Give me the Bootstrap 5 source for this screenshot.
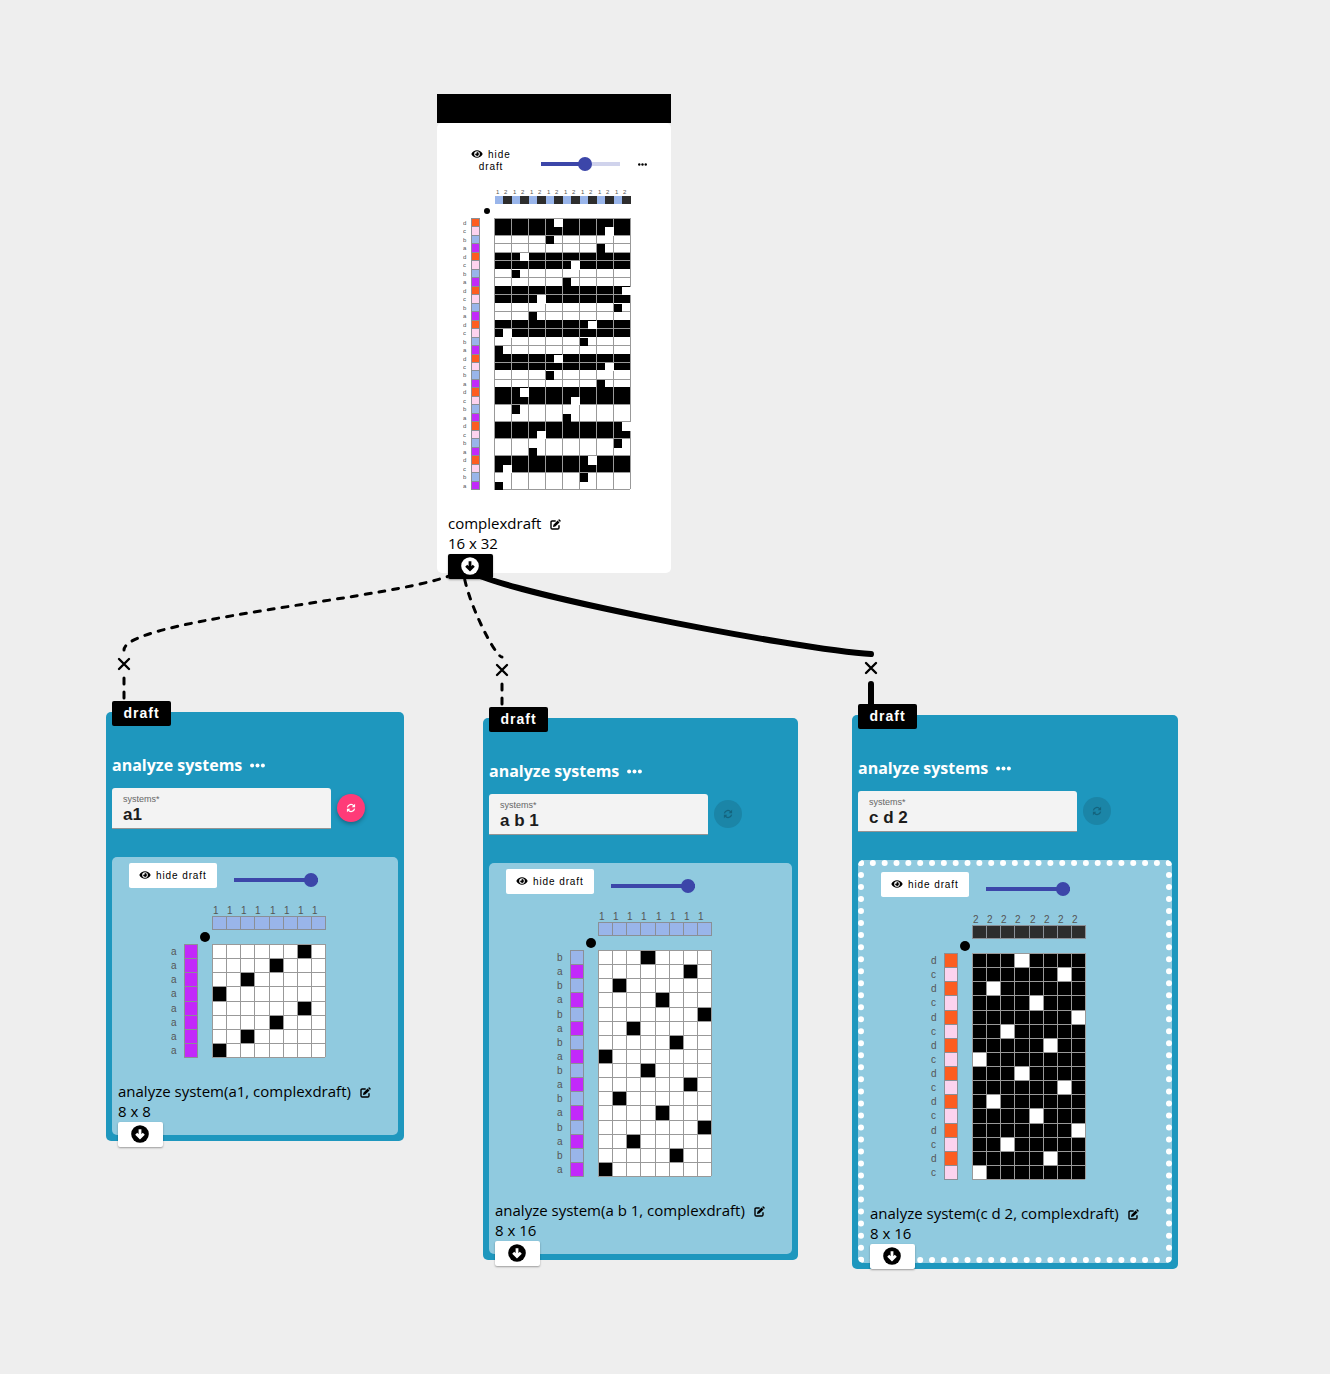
<!DOCTYPE html>
<html lang="en">
<head>
<meta charset="utf-8">
<meta name="viewport" content="width=device-width, initial-scale=1">
<title>Draft workspace</title>
<link href="https://cdn.jsdelivr.net/npm/bootstrap@5.3.0/dist/css/bootstrap.min.css" rel="stylesheet">
<style>
  body { background: #eee; color: #000; font-family: "Open Sans", "Noto Sans", sans-serif; font-size: 15px; line-height: 20px; }
  .workspace { min-height: 100vh; min-width: 1190px; }
  .wires { left: 0; top: 0; pointer-events: none; }
  .node { border-radius: 5px; }
  .node-seed { left: 437px; top: 94px; width: 234px; }
  .node-a { left: 106px; top: 712px; width: 298px; }
  .node-ab { left: 483px; top: 718px; width: 315px; }
  .node-cd { left: 852px; top: 715px; width: 326px; }
  .operation { background: #1e97be; padding: 43px 6px 6px; }
  .title-bar { height: 29px; background: #000; }
  .sheet { background: #fff; border-radius: 5px; padding: 12px 11px; }
  .panel { background: #90cadf; border-radius: 5px; padding: 6px; }
  .panel-selected { border: 6px dotted #fff; }
  .inlet { left: 6px; top: -11px; width: 59px; height: 25px; padding: 0; border: 0; border-radius: 2px; background: #000; color: #fff; font: 700 14px/25px "Liberation Sans", sans-serif; letter-spacing: 1px; }
  .op-title { color: #fff; font-size: 16px; font-weight: 700; line-height: 20px; margin-bottom: 13px; gap: 8px; }
  .bare { padding: 0; border: 0; background: none; color: inherit; line-height: 0; }
  .param-row { gap: 6px; margin-bottom: 28px; }
  .param { width: 219px; height: 41px; background: #f3f3f3; border-radius: 3px 3px 0 0; border-bottom: 1px solid #949494; padding: 7px 11px 0; font-family: "Liberation Sans", sans-serif; }
  .param label { font-size: 9px; line-height: 9px; color: #666; }
  .param input { border: 0; padding: 0; background: none; width: 100%; height: 22px; font-size: 17px; font-weight: 700; color: #1c1c1c; outline: 0; }
  .run-btn { width: 28px; height: 28px; margin-top: 6px; padding: 0; border: 0; border-radius: 50%; background: #ff3b78; color: #fff; box-shadow: 0 2px 4px rgba(0,0,0,.3); }
  .run-btn:disabled { background: #1b85a7; color: #14647e; box-shadow: none; }
  .tools { margin-bottom: 14px; padding-left: 11px; gap: 17px; }
  .toggle-btn { width: 88px; height: 25px; padding: 0; border: 0; border-radius: 2px; background: #fff; color: #000; font: 10px/12px "Liberation Sans", sans-serif; letter-spacing: .09em; }
  .toggle-btn svg { vertical-align: -1px; margin-right: 1px; }
  .tools-seed { height: 52px; margin-bottom: 0; padding: 0 12px 0 14px; gap: 0; }
  .tools-seed .toggle-btn { width: 58px; height: 24px; }
  .zoom-range { -webkit-appearance: none; appearance: none; width: 84px; height: 14px; margin: 8px 0 0; background: linear-gradient(#3c46a9, #3c46a9) center / 100% 4px no-repeat; border-radius: 2px; }
  .zoom-range::-webkit-slider-thumb { -webkit-appearance: none; width: 14px; height: 14px; border-radius: 50%; background: #3c46a9; border: 0; }
  .tools-seed .zoom-range { width: 79px; margin: 6px 0 0 21px; background: linear-gradient(90deg, #3c46a9 55%, #d0d3ec 55%) center / 100% 4px no-repeat; }
  .tools-seed .more { margin: 6px 0 0 18px; }
  .grid-wrap { margin-bottom: 10px; line-height: 0; }
  .grid-wrap text { font-family: "Liberation Sans", sans-serif; fill: #555; }
  .draft-name { gap: 9px; }
  .draft-name .bare { margin-top: 2px; }
  .outlet { --arrow: #fff; width: 45px; height: 25px; margin: 1px 0 -18px; padding: 0 2px 1px 0; border: 0; border-radius: 2px; background: #fff; color: #000; box-shadow: 0 1px 2px rgba(0,0,0,.35); position: relative; line-height: 0; }
  .outlet-dark { --arrow: #000; background: #000; color: #fff; }
  .cut { width: 16px; height: 16px; }
  .cut-a { left: 116px; top: 656px; }
  .cut-ab { left: 494px; top: 662px; }
  .cut-cd { left: 863px; top: 660px; }
</style>
</head>
<body>
<svg width="0" height="0" class="position-absolute" aria-hidden="true">
  <symbol id="eye" viewBox="0 0 576 512"><path fill="currentColor" d="M572.52 241.4C518.29 135.59 410.93 64 288 64S57.68 135.64 3.48 241.41a32.35 32.35 0 0 0 0 29.19C57.71 376.41 165.07 448 288 448s230.32-71.64 284.52-177.41a32.35 32.35 0 0 0 0-29.19zM288 400a144 144 0 1 1 144-144 143.93 143.93 0 0 1-144 144zm0-240a95.31 95.31 0 0 0-25.31 3.79 47.85 47.85 0 0 1-66.9 66.9A95.78 95.78 0 1 0 288 160z"/></symbol>
  <symbol id="dots" viewBox="0 0 15 5"><g fill="currentColor"><circle cx="2.1" cy="2.5" r="2"/><circle cx="7.5" cy="2.5" r="2"/><circle cx="12.9" cy="2.5" r="2"/></g></symbol>
  <symbol id="edit" viewBox="0 0 11 11"><path d="M5.2 2H2.2Q1 2 1 3.2v5.6Q1 10 2.2 10h5.6Q9 10 9 8.800V6.800" fill="none" stroke="currentColor" stroke-width="1.400" stroke-linecap="round"/><path d="M3.400 5.700 7.600 1.500 9.500 3.400 5.300 7.600 3 8zM8.100 1 8.700.4Q9.100 0 9.600.4L10.600 1.400Q11 1.900 10.600 2.300L10 2.900z" fill="currentColor"/></symbol>
  <symbol id="sync" viewBox="0 0 12 12"><g fill="none" stroke="currentColor" stroke-width="1.500"><path d="M1.700 5.200A4.300 4.300 0 0 1 9.300 3.400M10.300 6.800A4.300 4.300 0 0 1 2.700 8.600"/></g><path d="M10.900 1v4.100H6.800zM1.100 11V6.900h4.100z" fill="currentColor"/></symbol>
  <symbol id="cross" viewBox="0 0 16 16"><path d="M3 3l10 10M13 3L3 13" stroke="#000" stroke-width="2.400" stroke-linecap="round"/></symbol>
  <symbol id="down" viewBox="0 0 18 18"><circle cx="9" cy="9" r="8.800" fill="currentColor"/><path d="M9 4.200v7.500M5.200 8.700 9 12.500l3.800-3.800" fill="none" stroke="var(--arrow)" stroke-width="2.800"/></symbol>
</svg>

<main class="workspace position-relative">

  <section class="node node-seed position-absolute">
    <div class="title-bar"></div>
    <div class="sheet">
      <div class="tools tools-seed d-flex align-items-center">
        <button class="toggle-btn" type="button"><svg width="12" height="10" aria-hidden="true"><use href="#eye"/></svg> hide draft</button>
        <input class="zoom-range" type="range" min="0" max="100" value="57" aria-label="Zoom of complexdraft">
        <button class="bare more" type="button" aria-label="More options"><svg width="9" height="3" aria-hidden="true"><use href="#dots"/></svg></button>
      </div>
      <div class="grid-wrap text-center" data-grid="seed"></div>
      <div class="draft-name d-flex align-items-center"><span>complexdraft</span><button class="bare" type="button" aria-label="Rename"><svg width="11" height="11" aria-hidden="true"><use href="#edit"/></svg></button></div>
      <div>16 x 32</div>
      <button class="outlet outlet-dark d-block" type="button" aria-label="Connect output"><svg width="18" height="18" aria-hidden="true"><use href="#down"/></svg></button>
    </div>
  </section>

  <section class="node node-a operation position-absolute">
    <button class="inlet position-absolute" type="button">draft</button>
    <h2 class="op-title d-flex align-items-center">analyze systems <button class="bare" type="button" aria-label="Operation menu"><svg width="15" height="5" aria-hidden="true"><use href="#dots"/></svg></button></h2>
    <div class="param-row d-flex align-items-start">
      <div class="param"><label class="d-block" for="sys-a">systems*</label><input class="d-block" id="sys-a" type="text" value="a1"></div>
      <button class="run-btn d-flex align-items-center justify-content-center" type="button" aria-label="Recompute"><svg width="10" height="10" aria-hidden="true"><use href="#sync"/></svg></button>
    </div>
    <div class="panel">
      <div class="tools d-flex align-items-center">
        <button class="toggle-btn" type="button"><svg width="12" height="10" aria-hidden="true"><use href="#eye"/></svg> hide draft</button>
        <input class="zoom-range" type="range" min="0" max="100" value="100" aria-label="Zoom of a1 draft">
      </div>
      <div class="grid-wrap text-center" data-grid="a"></div>
      <div class="draft-name d-flex align-items-center"><span>analyze system(a1, complexdraft)</span><button class="bare" type="button" aria-label="Rename"><svg width="11" height="11" aria-hidden="true"><use href="#edit"/></svg></button></div>
      <div>8 x 8</div>
      <button class="outlet d-block" type="button" aria-label="Connect output"><svg width="18" height="18" aria-hidden="true"><use href="#down"/></svg></button>
    </div>
  </section>

  <section class="node node-ab operation position-absolute">
    <button class="inlet position-absolute" type="button">draft</button>
    <h2 class="op-title d-flex align-items-center">analyze systems <button class="bare" type="button" aria-label="Operation menu"><svg width="15" height="5" aria-hidden="true"><use href="#dots"/></svg></button></h2>
    <div class="param-row d-flex align-items-start">
      <div class="param"><label class="d-block" for="sys-ab">systems*</label><input class="d-block" id="sys-ab" type="text" value="a b 1"></div>
      <button class="run-btn d-flex align-items-center justify-content-center" type="button" disabled aria-label="Recompute"><svg width="10" height="10" aria-hidden="true"><use href="#sync"/></svg></button>
    </div>
    <div class="panel">
      <div class="tools d-flex align-items-center">
        <button class="toggle-btn" type="button"><svg width="12" height="10" aria-hidden="true"><use href="#eye"/></svg> hide draft</button>
        <input class="zoom-range" type="range" min="0" max="100" value="100" aria-label="Zoom of a b 1 draft">
      </div>
      <div class="grid-wrap text-center" data-grid="ab"></div>
      <div class="draft-name d-flex align-items-center"><span>analyze system(a b 1, complexdraft)</span><button class="bare" type="button" aria-label="Rename"><svg width="11" height="11" aria-hidden="true"><use href="#edit"/></svg></button></div>
      <div>8 x 16</div>
      <button class="outlet d-block" type="button" aria-label="Connect output"><svg width="18" height="18" aria-hidden="true"><use href="#down"/></svg></button>
    </div>
  </section>

  <section class="node node-cd operation position-absolute">
    <button class="inlet position-absolute" type="button">draft</button>
    <h2 class="op-title d-flex align-items-center">analyze systems <button class="bare" type="button" aria-label="Operation menu"><svg width="15" height="5" aria-hidden="true"><use href="#dots"/></svg></button></h2>
    <div class="param-row d-flex align-items-start">
      <div class="param"><label class="d-block" for="sys-cd">systems*</label><input class="d-block" id="sys-cd" type="text" value="c d 2"></div>
      <button class="run-btn d-flex align-items-center justify-content-center" type="button" disabled aria-label="Recompute"><svg width="10" height="10" aria-hidden="true"><use href="#sync"/></svg></button>
    </div>
    <div class="panel panel-selected">
      <div class="tools d-flex align-items-center">
        <button class="toggle-btn" type="button"><svg width="12" height="10" aria-hidden="true"><use href="#eye"/></svg> hide draft</button>
        <input class="zoom-range" type="range" min="0" max="100" value="100" aria-label="Zoom of c d 2 draft">
      </div>
      <div class="grid-wrap text-center" data-grid="cd"></div>
      <div class="draft-name d-flex align-items-center"><span>analyze system(c d 2, complexdraft)</span><button class="bare" type="button" aria-label="Rename"><svg width="11" height="11" aria-hidden="true"><use href="#edit"/></svg></button></div>
      <div>8 x 16</div>
      <button class="outlet d-block" type="button" aria-label="Connect output"><svg width="18" height="18" aria-hidden="true"><use href="#down"/></svg></button>
    </div>
  </section>

  <svg class="wires position-absolute" width="1190" height="720" fill="none" stroke="#000" stroke-linecap="round" aria-hidden="true">
    <defs><clipPath id="below"><path d="M0 573H448V578H1190V707H0z"/></clipPath></defs>
    <g clip-path="url(#below)">
      <g stroke-width="3" stroke-dasharray="6 8">
        <path d="M463 566C463 594 124 616 124 650"/>
        <path d="M463 566C463 594 495 657 502 657"/>
        <path d="M124 678v21M502 684v21"/>
      </g>
      <path stroke-width="6" d="M463 566C463 586 805 651 871 654M871 684v20"/>
    </g>
  </svg>
  <button class="bare cut cut-a position-absolute" type="button" aria-label="Remove connection to a1"><svg width="16" height="16" aria-hidden="true"><use href="#cross"/></svg></button>
  <button class="bare cut cut-ab position-absolute" type="button" aria-label="Remove connection to a b 1"><svg width="16" height="16" aria-hidden="true"><use href="#cross"/></svg></button>
  <button class="bare cut cut-cd position-absolute" type="button" aria-label="Remove connection to c d 2"><svg width="16" height="16" aria-hidden="true"><use href="#cross"/></svg></button>
</main>

<script>
  const COLORS = { a: '#c229fa', b: '#99b5ea', c: '#fdd3ef', d: '#fd5d20', 1: '#99b5ea', 2: '#2d2d2d' };
  const eight = [3, 6, 1, 4, 7, 2, 5, 0];
  const sixteen = [7, 13, 6, 12, 3, 9, 2, 8, 15, 5, 14, 4, 11, 1, 10, 0];
  const GAP = 14;

  // marks: the one column per row that differs from the row's ground colour
  const DRAFTS = {
    seed: { pitch: 271 / 32, font: 6, rows: 'dcba'.repeat(8), cols: '12'.repeat(8), marks: sixteen.concat(sixteen), inverted: 'dc',
            hLines: [0, 2, 3, 4, 5, 7, 9, 11, 13, 15, 17, 19, 22, 24, 26, 28, 30, 32], vLines: [0, 2, 4, 6, 8, 10, 12, 14, 16] },
    a:  { pitch: 113 / 8, font: 10, rows: 'a'.repeat(8), cols: '1'.repeat(8), marks: [6, 4, 2, 0, 6, 4, 2, 0], inverted: '' },
    ab: { pitch: 113 / 8, font: 10, rows: 'ba'.repeat(8), cols: '1'.repeat(8), marks: eight.concat(eight), inverted: '' },
    cd: { pitch: 113 / 8, font: 10, rows: 'dc'.repeat(8), cols: '2'.repeat(8), marks: eight.concat(eight), inverted: 'dc' }
  };

  function drawDraft(d) {
    const at = k => Math.round(k * d.pitch);
    const left = at(2) + GAP, top = at(2) + GAP;
    const w = at(d.cols.length), h = at(d.rows.length);
    const rect = (x, y, rw, rh, fill, line) => `<rect x="${x}" y="${y}" width="${rw}" height="${rh}" fill="${fill}"${line ? ' stroke="#8a8f96"' : ''}/>`;
    const small = d.pitch < 10;
    let out = '', labels = '';
    [...d.cols].forEach((c, i) => {
      out += rect(left + at(i) + .5, at(1) + .5, at(i + 1) - at(i), at(2) - at(1) - 1, COLORS[c], !small);
      labels += `<text x="${left + at(i) + (small ? 2 : 1)}" y="${at(1) - (small ? 1 : 2)}">${c}</text>`;
    });
    [...d.rows].forEach((r, j) => {
      const y = top + at(j), rh = at(j + 1) - at(j), ground = d.inverted.includes(r);
      out += rect(at(1) + .5, y + .5, at(2) - at(1) - 1, rh, COLORS[r], true);
      out += rect(left, y, w, rh, ground ? '#000' : '#fff');
      labels += `<text x="${small ? 0 : 1}" y="${y + Math.round(d.pitch * .77)}">${r}</text>`;
    });
    const hs = d.hLines || [...d.rows, 0].map((_, i) => i);
    const vs = d.vLines || [...d.cols, 0].map((_, i) => i);
    let lines = '';
    hs.forEach(k => lines += `M${left} ${top + at(k) + .5}h${w}`);
    vs.forEach(k => lines += `M${left + at(k) + .5} ${top}v${h}`);
    out += `<path d="${lines}" stroke="#999" fill="none"/>`;
    d.marks.forEach((m, j) => {
      const fill = d.inverted.includes(d.rows[j]) ? '#fff' : '#000';
      out += rect(left + at(m) + 1, top + at(j) + 1, at(m + 1) - at(m) - (small ? 0 : 1), at(j + 1) - at(j) - (small ? 0 : 1), fill);
    });
    const total = left + w + GAP;
    return `<svg width="${total + total % 2}" height="${top + h + GAP}" role="img" aria-label="Weave draft">
      <g shape-rendering="crispEdges">${out}</g>
      <circle cx="${left - GAP / 2}" cy="${top - GAP / 2}" r="${small ? 3 : 5}"/>
      <g font-size="${d.font}">${labels}</g></svg>`;
  }

  document.querySelectorAll('[data-grid]').forEach(el => { el.innerHTML = drawDraft(DRAFTS[el.dataset.grid]); });
</script>
<script src="https://cdn.jsdelivr.net/npm/bootstrap@5.3.0/dist/js/bootstrap.bundle.min.js"></script>
</body>
</html>
